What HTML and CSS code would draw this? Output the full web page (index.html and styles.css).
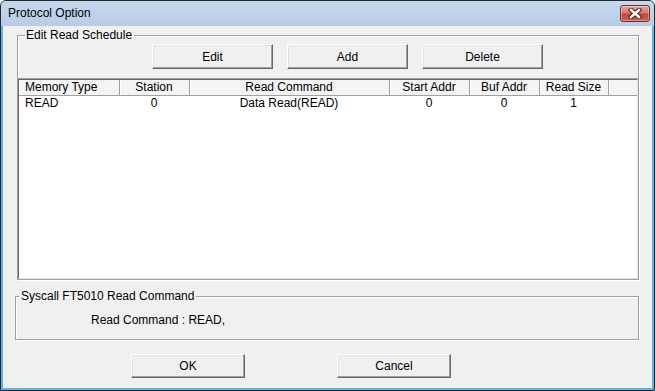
FILE: index.html
```html
<!DOCTYPE html>
<html lang="en">
<head>
  <meta charset="UTF-8">
  <meta name="viewport" content="width=device-width, initial-scale=1.0">
  <title>Protocol Option</title>
  <link rel="stylesheet" href="styles.css">
</head>
<body>
  <div class="window">
    <div class="titlebar">
      <span class="title">Protocol Option</span>
      <button class="close-btn" title="Close">
        <svg width="16" height="11" viewBox="0 0 16 11">
          <path d="M4 2 L12 9 M12 2 L4 9" stroke="#5a2a24" stroke-width="4.6" stroke-linecap="square"/>
          <path d="M4 2 L12 9 M12 2 L4 9" stroke="#ffffff" stroke-width="2.4" stroke-linecap="square"/>
        </svg>
      </button>
    </div>

    <div class="client">
      <fieldset class="group schedule">
        <legend>Edit Read Schedule</legend>
        <div class="btn-row">
          <button class="btn">Edit</button>
          <button class="btn">Add</button>
          <button class="btn">Delete</button>
        </div>

        <div class="listview">
          <div class="list-inner">
            <table>
              <colgroup>
                <col style="width: 100px">
                <col style="width: 70px">
                <col style="width: 200px">
                <col style="width: 80px">
                <col style="width: 70px">
                <col style="width: 69px">
                <col>
              </colgroup>
              <thead>
                <tr>
                  <th class="left">Memory Type</th>
                  <th>Station</th>
                  <th>Read Command</th>
                  <th>Start Addr</th>
                  <th>Buf Addr</th>
                  <th>Read Size</th>
                  <th class="filler"></th>
                </tr>
              </thead>
              <tbody>
                <tr>
                  <td class="left">READ</td>
                  <td>0</td>
                  <td>Data Read(READ)</td>
                  <td>0</td>
                  <td>0</td>
                  <td>1</td>
                  <td></td>
                </tr>
              </tbody>
            </table>
          </div>
        </div>
      </fieldset>

      <fieldset class="group syscall">
        <legend>Syscall FT5010 Read Command</legend>
        <div class="cmd-text">Read Command : READ,</div>
      </fieldset>

      <div class="dialog-btns">
        <button class="btn">OK</button>
        <button class="btn">Cancel</button>
      </div>
    </div>
  </div>
</body>
</html>
```

FILE: styles.css
```css
* {
  box-sizing: border-box;
}

body {
  margin: 0;
  background-color: #ffffff;
  font-family: 'Liberation Sans', Arial, sans-serif;
  font-size: 12px;
  color: #000000;
}

.window {
  width: 655px;
  height: 391px;
  border: 1px solid #262a2e;
  border-radius: 6px 6px 0 0;
  background-color: #5fb2e6;
  display: flex;
  flex-direction: column;
  overflow: hidden;
}

.titlebar {
  height: 25px;
  flex: none;
  display: flex;
  align-items: center;
  justify-content: space-between;
  padding: 0 4px 0 7px;
  background: linear-gradient(#c5d8ee, #b7cde6);
}

.title {
  line-height: 14px;
  margin-top: -1px;
}

.close-btn {
  width: 30px;
  height: 17px;
  margin-top: -1px;
  padding: 0;
  border: 1px solid #7a2c24;
  border-radius: 3px;
  background: linear-gradient(#e2a89e, #d27a6c 45%, #c04a38 55%, #c9604c);
  box-shadow: inset 0 0 0 1px rgba(255, 255, 255, 0.35);
  display: flex;
  align-items: center;
  justify-content: center;
}

.client {
  flex: 1;
  margin: 0 2px 2px;
  background-color: #f0f0f0;
  display: flex;
  flex-direction: column;
}

/* etched group boxes */
.group {
  margin: 0;
  padding: 0;
  border: 1px solid #a0a0a0;
  box-shadow: 1px 1px 0 #ffffff, inset 1px 1px 0 #ffffff;
  min-width: 0;
}

.group legend {
  line-height: 14px;
  padding: 0 2px 0 1px;
}

.schedule {
  margin: 2px 13px 0 14px;
}

.schedule legend {
  margin-left: 7px;
}

.btn-row {
  display: flex;
  gap: 14px;
  padding: 2px 0 0 134px;
}

.btn-row .btn {
  width: 121px;
  height: 25px;
}

.btn {
  font-family: inherit;
  font-size: 12px;
  color: #000000;
  background-color: #f0f0f0;
  border: 1px solid;
  border-color: #ffffff #696969 #696969 #ffffff;
  box-shadow: inset -1px -1px 0 #a0a0a0, inset 1px 1px 0 #e3e3e3;
  padding: 0;
  line-height: 14px;
}

.listview {
  margin: 9px -1px -1px;
  height: 202px;
  border: 1px solid #a0a0a0;
}

.list-inner {
  height: 100%;
  background-color: #ffffff;
  border-style: solid;
  border-width: 1px;
  border-color: #696969 #e3e3e3 #e3e3e3 #696969;
}

table {
  width: 100%;
  table-layout: fixed;
  border-collapse: collapse;
}

th {
  font-weight: normal;
  height: 15px;
  padding: 1px 0 0;
  line-height: 13px;
  background-color: #f4f4f4;
  border-right: 1px solid #a0a0a0;
  border-bottom: 1px solid #a0a0a0;
  box-shadow: inset 1px 0 0 #ffffff;
  text-align: center;
  white-space: nowrap;
}

th.filler {
  border-right: none;
}

td {
  line-height: 14px;
  padding: 0;
  text-align: center;
  white-space: nowrap;
}

.left {
  text-align: left;
  padding-left: 6px;
}

.syscall {
  margin: 9px 13px 0 12px;
}

.syscall legend {
  margin-left: 3px;
  padding: 0 2px;
}

.cmd-text {
  line-height: 14px;
  padding: 10px 0 12px 75px;
}

.dialog-btns {
  display: flex;
  gap: 92px;
  padding: 14px 0 0 128px;
}

.dialog-btns .btn {
  width: 114px;
  height: 24px;
}
```
